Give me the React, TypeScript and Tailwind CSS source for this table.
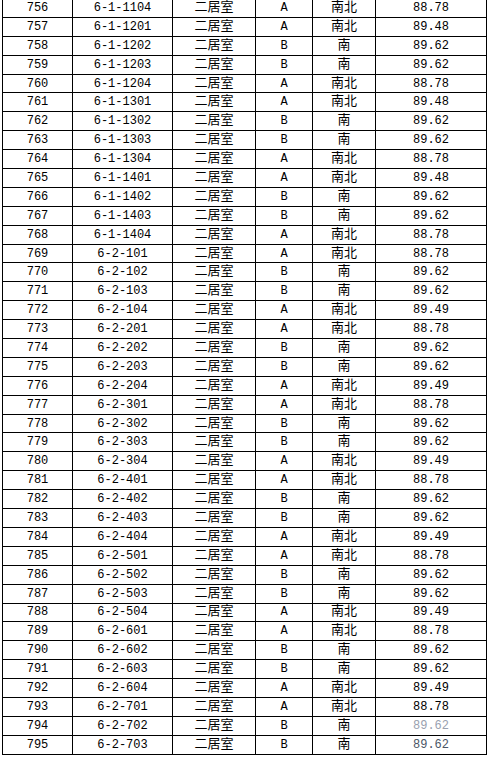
import React from 'react';

type Row = [number, string, string, string, string, string];

const rows: Row[] = [
  [756, '6-1-1104', '二居室', 'A', '南北', '88.78'],
  [757, '6-1-1201', '二居室', 'A', '南北', '89.48'],
  [758, '6-1-1202', '二居室', 'B', '南', '89.62'],
  [759, '6-1-1203', '二居室', 'B', '南', '89.62'],
  [760, '6-1-1204', '二居室', 'A', '南北', '88.78'],
  [761, '6-1-1301', '二居室', 'A', '南北', '89.48'],
  [762, '6-1-1302', '二居室', 'B', '南', '89.62'],
  [763, '6-1-1303', '二居室', 'B', '南', '89.62'],
  [764, '6-1-1304', '二居室', 'A', '南北', '88.78'],
  [765, '6-1-1401', '二居室', 'A', '南北', '89.48'],
  [766, '6-1-1402', '二居室', 'B', '南', '89.62'],
  [767, '6-1-1403', '二居室', 'B', '南', '89.62'],
  [768, '6-1-1404', '二居室', 'A', '南北', '88.78'],
  [769, '6-2-101', '二居室', 'A', '南北', '88.78'],
  [770, '6-2-102', '二居室', 'B', '南', '89.62'],
  [771, '6-2-103', '二居室', 'B', '南', '89.62'],
  [772, '6-2-104', '二居室', 'A', '南北', '89.49'],
  [773, '6-2-201', '二居室', 'A', '南北', '88.78'],
  [774, '6-2-202', '二居室', 'B', '南', '89.62'],
  [775, '6-2-203', '二居室', 'B', '南', '89.62'],
  [776, '6-2-204', '二居室', 'A', '南北', '89.49'],
  [777, '6-2-301', '二居室', 'A', '南北', '88.78'],
  [778, '6-2-302', '二居室', 'B', '南', '89.62'],
  [779, '6-2-303', '二居室', 'B', '南', '89.62'],
  [780, '6-2-304', '二居室', 'A', '南北', '89.49'],
  [781, '6-2-401', '二居室', 'A', '南北', '88.78'],
  [782, '6-2-402', '二居室', 'B', '南', '89.62'],
  [783, '6-2-403', '二居室', 'B', '南', '89.62'],
  [784, '6-2-404', '二居室', 'A', '南北', '89.49'],
  [785, '6-2-501', '二居室', 'A', '南北', '88.78'],
  [786, '6-2-502', '二居室', 'B', '南', '89.62'],
  [787, '6-2-503', '二居室', 'B', '南', '89.62'],
  [788, '6-2-504', '二居室', 'A', '南北', '89.49'],
  [789, '6-2-601', '二居室', 'A', '南北', '88.78'],
  [790, '6-2-602', '二居室', 'B', '南', '89.62'],
  [791, '6-2-603', '二居室', 'B', '南', '89.62'],
  [792, '6-2-604', '二居室', 'A', '南北', '89.49'],
  [793, '6-2-701', '二居室', 'A', '南北', '88.78'],
  [794, '6-2-702', '二居室', 'B', '南', '89.62'],
  [795, '6-2-703', '二居室', 'B', '南', '89.62'],
];

// one stack for every cell so all baselines line up; CJK glyphs fall back
const cell =
  "border border-black text-center align-middle p-0 leading-[16px] font-['Liberation_Mono','Noto_Sans_CJK_SC',monospace]";

const App: React.FC = () => {
  return (
    <div className="w-[490px] h-[758px] overflow-hidden bg-white">
      <table className="table-fixed border-collapse w-[484px] ml-[2px] mt-[-2px] text-black">
        <colgroup>
          <col className="w-[70px]" />
          <col className="w-[100px]" />
          <col className="w-[83px]" />
          <col className="w-[57px]" />
          <col className="w-[63px]" />
          <col className="w-[111px]" />
        </colgroup>
        <tbody>
          {rows.map(([no, unit, type, kind, face, area], i) => (
            <tr key={no} className="h-[18.9px]">
              <td className={`${cell} text-[12px]`}>{no}</td>
              <td className={`${cell} text-[12px]`}>{unit}</td>
              <td className={`${cell} text-[13px]`}>{type}</td>
              <td className={`${cell} text-[12px]`}>{kind}</td>
              <td className={`${cell} text-[13px]`}>{face}</td>
              <td
                className={`${cell} text-[12px] ${
                  i === rows.length - 2 ? 'text-gray-400' : i === rows.length - 1 ? 'text-gray-600' : ''
                }`}
              >
                {area}
              </td>
            </tr>
          ))}
        </tbody>
      </table>
    </div>
  );
};

export default App;
